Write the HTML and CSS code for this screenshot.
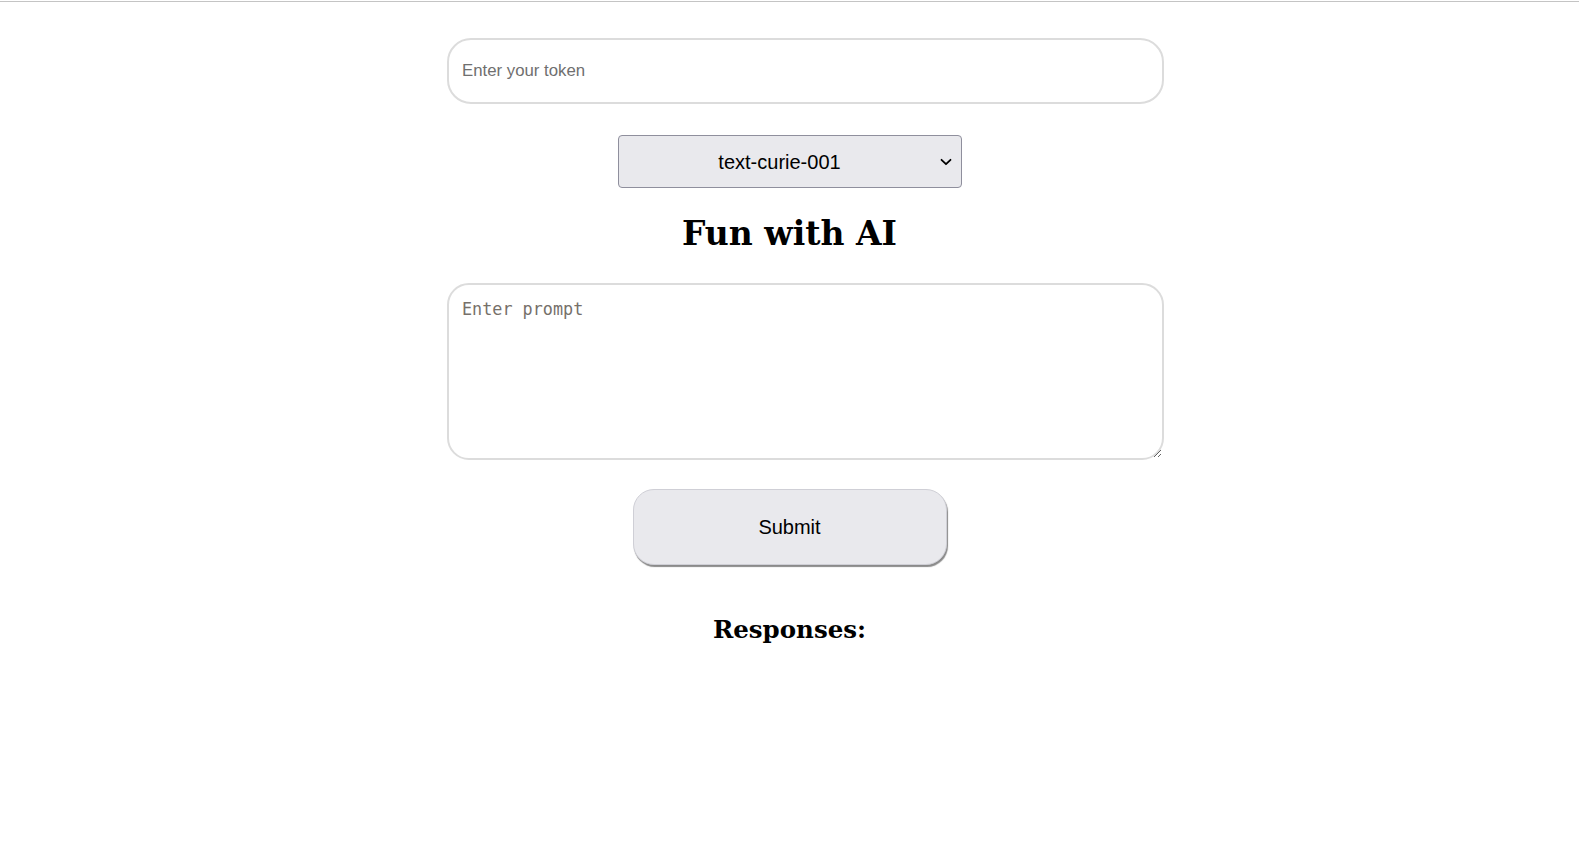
FILE: index.html
```html
<!DOCTYPE html>
<html lang="en">
<head>
<meta charset="utf-8">
<title>Fun with AI</title>
<link rel="stylesheet" href="styles.css">
</head>
<body>
<div class="topline"></div>
<main class="app">
  <input class="token" type="text" placeholder="Enter your token">
  <select class="model">
    <option>text-curie-001</option>
    <option>text-davinci-002</option>
    <option>text-babbage-001</option>
    <option>text-ada-001</option>
  </select>
  <h1 class="title">Fun with AI</h1>
  <textarea class="prompt" placeholder="Enter prompt"></textarea>
  <button class="submit" type="button">Submit</button>
  <h2 class="responses">Responses:</h2>
</main>
</body>
</html>
```
FILE: styles.css
```css
html, body {
  margin: 0;
  padding: 0;
  background: #ffffff;
}

.topline {
  margin-top: 1px;
  height: 1px;
  background: #c4c4c4;
}

.app {
  width: 685px;
  margin: 0 auto;
  display: flex;
  flex-direction: column;
  align-items: center;
}

.token {
  align-self: flex-start;
  box-sizing: border-box;
  width: 717px;
  height: 66px;
  margin-top: 36px;
  padding: 0 14px 0 13px;
  border: 2px solid #dcdcdc;
  border-radius: 24px;
  font-family: "Liberation Sans", Arial, sans-serif;
  font-size: 16.8px;
  color: #000;
  outline: none;
  background: #fff;
}

.token::placeholder {
  color: #6f6f6f;
}

.model {
  box-sizing: border-box;
  width: 344px;
  height: 53px;
  margin-top: 31px;
  -webkit-appearance: none;
  appearance: none;
  border: 1px solid #8f8f9d;
  border-radius: 4px;
  background-color: #e9e9ed;
  background-image: url("data:image/svg+xml;utf8,<svg xmlns='http://www.w3.org/2000/svg' width='12' height='8' viewBox='0 0 12 8'><path d='M1.5 1.8 L6 6.2 L10.5 1.8' fill='none' stroke='%23000' stroke-width='1.8' stroke-linecap='round' stroke-linejoin='round'/></svg>");
  background-repeat: no-repeat;
  background-position: right 9px center;
  background-size: 12px 8px;
  text-align: center;
  text-align-last: center;
  padding: 0 20px 0 0;
  font-family: "Liberation Sans", Arial, sans-serif;
  font-size: 20px;
  color: #000;
}

.title {
  margin: 27px 0 0;
  height: 38px;
  line-height: 38px;
  font-family: "DejaVu Serif", "Liberation Serif", serif;
  font-weight: bold;
  font-size: 33px;
  color: #000;
}

.prompt {
  align-self: flex-start;
  box-sizing: border-box;
  width: 717px;
  height: 177px;
  margin-top: 30px;
  padding: 13px 13px;
  border: 2px solid #dcdcdc;
  border-radius: 22px;
  font-family: "DejaVu Sans Mono", "Liberation Mono", monospace;
  font-size: 16.8px;
  line-height: 22px;
  color: #000;
  outline: none;
  background: #fff;
}

.prompt::placeholder {
  color: #76706a;
}

.submit {
  box-sizing: border-box;
  width: 314px;
  height: 76px;
  margin-top: 29px;
  border: 1px solid #cfcfd6;
  border-radius: 21px;
  background: #e9e9ed;
  box-shadow: 1px 2px 1px #8a8a8a;
  font-family: "Liberation Sans", Arial, sans-serif;
  font-size: 20px;
  color: #000;
  cursor: pointer;
}

.responses {
  margin: 51px 0 0;
  height: 28px;
  line-height: 28px;
  font-family: "DejaVu Serif", "Liberation Serif", serif;
  font-weight: bold;
  font-size: 24.5px;
  color: #000;
}
```
